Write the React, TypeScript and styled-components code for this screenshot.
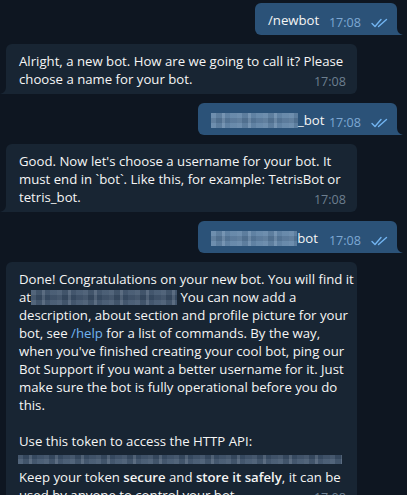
import React from 'react';
import styled, { createGlobalStyle } from 'styled-components';

const GlobalStyle = createGlobalStyle`
	html, body {
		margin: 0;
		padding: 0;
		background: #0e1621;
		overflow: hidden;
	}
	body {
		font-family: 'Open Sans', 'Noto Sans', sans-serif;
	}
`;

const Chat = styled.div`
	width: 407px;
	height: 495px;
	overflow: hidden;
	background: #0e1621;
	display: flex;
	flex-direction: column;
	gap: 9px;
	padding: 3px 10px 0 6px;
	box-sizing: border-box;
`;

const Row = styled.div<{ $out?: boolean }>`
	display: flex;
	justify-content: ${(p) => (p.$out ? 'flex-end' : 'flex-start')};
`;

const Bubble = styled.div<{ $out?: boolean; $width: number }>`
	position: relative;
	box-sizing: border-box;
	width: ${(p) => p.$width}px;
	white-space: nowrap;
	text-align: ${(p) => (p.$out ? 'right' : 'left')};
	padding: 8px ${(p) => (p.$out ? '9px' : '11px')} 6px 13px;
	border-radius: 6px;
	border-${(p) => (p.$out ? 'bottom-right' : 'bottom-left')}-radius: 0;
	background: ${(p) => (p.$out ? '#2b5278' : '#182533')};
	color: #f5f5f5;
	font-size: 13.2px;
	line-height: 18px;

	&::after {
		content: '';
		position: absolute;
		bottom: 0;
		${(p) => (p.$out ? 'right: -6px;' : 'left: -6px;')}
		width: 6px;
		height: 8px;
		background: ${(p) => (p.$out ? '#2b5278' : '#182533')};
		${(p) =>
			p.$out
				? 'clip-path: path("M0 0 C0 5 2 7 6 8 L0 8 Z");'
				: 'clip-path: path("M6 0 C6 5 4 7 0 8 L6 8 Z");'}
	}
`;

const Para = styled.p`
	margin: 0;
	& + & {
		margin-top: 18px;
	}
`;

const Spacer = styled.span<{ $w: number }>`
	display: inline-block;
	width: ${(p) => p.$w}px;
	height: 1px;
`;

const Meta = styled.span<{ $out?: boolean }>`
	position: absolute;
	right: ${(p) => (p.$out ? '9px' : '11px')};
	bottom: 3px;
	display: flex;
	align-items: center;
	gap: 10px;
	font-size: 12.6px;
	line-height: 18px;
	color: ${(p) => (p.$out ? '#7da8d3' : '#6d7f8f')};
`;

const Link = styled.span`
	color: #71b3f0;
`;

const Strong = styled.b`
	font-weight: 600;
`;

const Redacted = styled.span<{ $w: number; $h?: number; $out?: boolean }>`
	display: inline-block;
	width: ${(p) => p.$w}px;
	height: ${(p) => p.$h ?? 15}px;
	vertical-align: -3px;
	background:
		repeating-linear-gradient(
			90deg,
			rgba(255, 255, 255, 0.07) 0 5px,
			rgba(0, 0, 0, 0.06) 5px 11px,
			rgba(255, 255, 255, 0.12) 11px 14px,
			rgba(0, 0, 0, 0.03) 14px 19px,
			rgba(255, 255, 255, 0.04) 19px 26px
		),
		repeating-linear-gradient(
			0deg,
			rgba(255, 255, 255, 0.05) 0 5px,
			rgba(0, 0, 0, 0.07) 5px 10px
		),
		${(p) => (p.$out ? '#5b7fa3' : '#3b5069')};
`;

const TokenLine = styled.span`
	display: flex;
	height: 18px;
	align-items: center;
	margin-left: -1px;
`;

function Checks() {
	return (
		<svg width="17" height="10" viewBox="0 0 17 10" fill="none">
			<path
				d="M1 5.5 L4 8.5 L10 1.5"
				stroke="#72b4f0"
				strokeWidth="1.4"
				strokeLinecap="round"
				strokeLinejoin="round"
			/>
			<path d="M7.5 8.5 L15.5 1.5" stroke="#72b4f0" strokeWidth="1.4" strokeLinecap="round" />
		</svg>
	);
}

function OutMessage({ children, width }: { children: React.ReactNode; width: number }) {
	return (
		<Row $out>
			<Bubble $out $width={width}>
				{children}
				<Spacer $w={70} />
				<Meta $out>
					17:08
					<Checks />
				</Meta>
			</Bubble>
		</Row>
	);
}

function InMessage({ children }: { children: React.ReactNode }) {
	return (
		<Row>
			<Bubble $width={351}>
				{children}
				<Meta>17:08</Meta>
			</Bubble>
		</Row>
	);
}

export default function App() {
	return (
		<>
			<GlobalStyle />
			<Chat>
				<OutMessage width={142}>/newbot</OutMessage>

				<InMessage>
					<Para>
						Alright, a new bot. How are we going to call it? Please
						<br />
						choose a name for your bot.
					</Para>
				</InMessage>

				<OutMessage width={199}>
					<Redacted $out $w={87} />
					_bot
				</OutMessage>

				<InMessage>
					<Para>
						Good. Now let's choose a username for your bot. It
						<br />
						must end in `bot`. Like this, for example: TetrisBot or
						<br />
						tetris_bot.
					</Para>
				</InMessage>

				<OutMessage width={199}>
					<Redacted $out $w={86} />
					bot
				</OutMessage>

				<InMessage>
					<Para>
						Done! Congratulations on your new bot. You will find it
						<br />
						at
						<Redacted $w={146} /> You can now add a
						<br />
						description, about section and profile picture for your
						<br />
						bot, see <Link>/help</Link> for a list of commands. By the way,
						<br />
						when you've finished creating your cool bot, ping our
						<br />
						Bot Support if you want a better username for it. Just
						<br />
						make sure the bot is fully operational before you do
						<br />
						this.
					</Para>
					<Para>
						Use this token to access the HTTP API:
						<TokenLine>
							<Redacted $w={324} $h={9} />
						</TokenLine>
						Keep your token <Strong>secure</Strong> and <Strong>store it safely</Strong>, it can be
						<br />
						used by anyone to control your bot.
					</Para>
				</InMessage>
			</Chat>
		</>
	);
}
